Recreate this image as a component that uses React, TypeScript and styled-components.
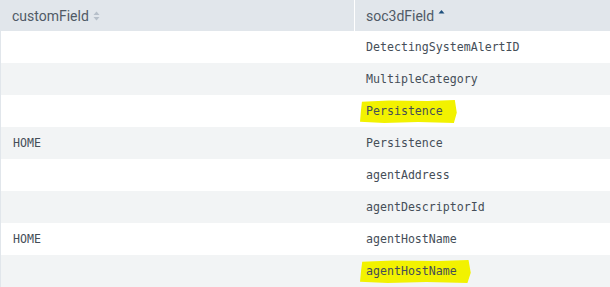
import React from "react";
import styled, { createGlobalStyle } from "styled-components";

const Global = createGlobalStyle`
  html, body { margin: 0; padding: 0; background: #ffffff; }
  body { width: 610px; height: 287px; overflow: hidden; }
`;

const Table = styled.div`
  width: 610px;
  border-left: 1px solid #e1e6eb;
  box-sizing: border-box;
  display: flex;
  flex-direction: column;
`;

const HeaderRow = styled.div`
  display: grid;
  grid-template-columns: 353px 1fr;
  height: 31px;
  background: #e1e6eb;
`;

const HeaderCell = styled.div<{ $divider?: boolean }>`
  display: flex;
  align-items: center;
  gap: 4px;
  padding-left: 11px;
  border-left: ${(p) => (p.$divider ? "1px solid #ffffff" : "none")};
  font-family: Roboto, "Liberation Sans", sans-serif;
  font-size: 14px;
  color: #505a66;
`;

const Row = styled.div<{ $striped?: boolean }>`
  display: grid;
  grid-template-columns: 353px 1fr;
  height: 32px;
  background: ${(p) => (p.$striped ? "#f2f4f5" : "#ffffff")};
`;

const Cell = styled.div`
  display: flex;
  align-items: center;
  padding-left: 12px;
  font-family: "DejaVu Sans Mono", "Liberation Mono", monospace;
  font-size: 11.6px;
  color: #454e58;
  white-space: nowrap;
`;

const Marked = styled.span`
  position: relative;
  z-index: 0;
  &::before {
    content: "";
    position: absolute;
    z-index: -1;
    left: -6px;
    right: -14px;
    top: -4px;
    bottom: -5px;
    background: #f2f200;
    clip-path: polygon(2% 8%, 30% 2%, 70% 4%, 98% 0%, 100% 55%, 97% 100%, 60% 96%, 25% 100%, 0% 95%, 1% 45%);
  }
`;

const SortBoth = () => (
  <svg width="7" height="10" viewBox="0 0 7 10">
    <path d="M3.5 0.5 L6.5 4 H0.5 Z" fill="#b6bfc9" />
    <path d="M3.5 9.5 L6.5 6 H0.5 Z" fill="#b6bfc9" />
  </svg>
);

const SortUp = () => (
  <svg width="7" height="10" viewBox="0 0 7 10" style={{ marginTop: -4 }}>
    <path d="M3.5 1 L6.5 4.5 H0.5 Z" fill="#1d4f7d" />
  </svg>
);

const rows: { custom: string; soc: string; mark?: boolean }[] = [
  { custom: "", soc: "DetectingSystemAlertID" },
  { custom: "", soc: "MultipleCategory" },
  { custom: "", soc: "Persistence", mark: true },
  { custom: "HOME", soc: "Persistence" },
  { custom: "", soc: "agentAddress" },
  { custom: "", soc: "agentDescriptorId" },
  { custom: "HOME", soc: "agentHostName" },
  { custom: "", soc: "agentHostName", mark: true },
];

export default function App() {
  return (
    <>
      <Global />
      <Table>
        <HeaderRow>
          <HeaderCell>
            customField <SortBoth />
          </HeaderCell>
          <HeaderCell $divider>
            soc3dField <SortUp />
          </HeaderCell>
        </HeaderRow>
        {rows.map((r, i) => (
          <Row key={i} $striped={i % 2 === 1}>
            <Cell>{r.custom}</Cell>
            <Cell>{r.mark ? <Marked>{r.soc}</Marked> : r.soc}</Cell>
          </Row>
        ))}
      </Table>
    </>
  );
}
